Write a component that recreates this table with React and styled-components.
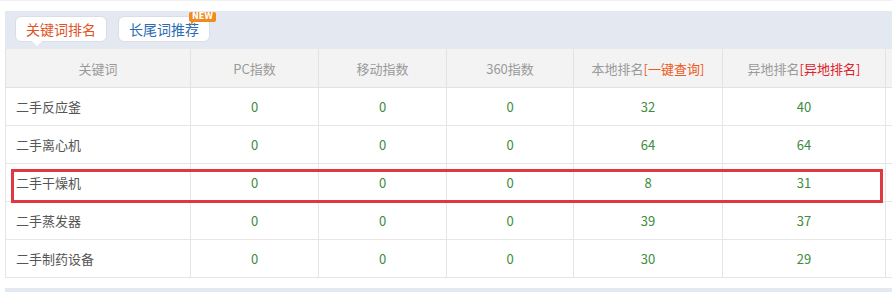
import React from "react";
import styled, { createGlobalStyle } from "styled-components";

const Global = createGlobalStyle`
  html, body { margin: 0; padding: 0; background: #fff; }
  body { font-family: "Microsoft YaHei", "Noto Sans CJK SC", "Noto Sans", sans-serif; }
`;

const Page = styled.div`
  width: 892px;
  height: 292px;
  overflow: hidden;
  box-sizing: border-box;
  border-top: 1px solid #f0f0f0;
  padding: 10px 0 0 5px;
`;

const Panel = styled.div`
  width: 910px;
  position: relative;
`;

const TabBar = styled.div`
  height: 38px;
  background: #e4e8f1;
  display: flex;
  align-items: flex-start;
  gap: 11px;
  padding: 5px 0 0 10px;
  box-sizing: border-box;
`;

const Tab = styled.div`
  position: relative;
  height: 26px;
  box-sizing: border-box;
  padding: 0 10px;
  background: #fff;
  border: 1px solid #d9dde6;
  border-radius: 6px;
  font-size: 14px;
  line-height: 24px;
  color: ${(p) => (p.$active ? "#e2531f" : "#2d6db3")};
  white-space: nowrap;
  ${(p) =>
    p.$active &&
    `
    &::after {
      content: "";
      position: absolute;
      left: 16px;
      bottom: -5px;
      width: 0; height: 0;
      border-left: 5px solid transparent;
      border-right: 5px solid transparent;
      border-top: 5px solid #fff;
    }
  `}
`;

const Badge = styled.span`
  position: absolute;
  right: -7px;
  top: -5px;
  background: #f08c1e;
  color: #fff;
  font-family: "DejaVu Sans", sans-serif;
  font-weight: bold;
  font-size: 8px;
  line-height: 10px;
  padding: 0 3px;
  border-radius: 2px;
  &::after {
    content: "";
    position: absolute;
    left: 2px;
    bottom: -3px;
    border-left: 3px solid #f08c1e;
    border-bottom: 3px solid transparent;
  }
`;

const Table = styled.table`
  border-collapse: collapse;
  table-layout: fixed;
  width: 910px;
  font-size: 13px;
`;

const Th = styled.th`
  height: 38px;
  padding: 0;
  background: #f3f3f3;
  border: 1px solid #e2e2e2;
  border-top: none;
  color: #9a9a9a;
  font-weight: normal;
  text-align: center;
`;

const Td = styled.td`
  height: 38px;
  padding: 0 ${(p) => (p.$left ? "10px" : "0")};
  border: 1px solid #e6e6e6;
  text-align: ${(p) => (p.$left ? "left" : "center")};
  color: ${(p) => (p.$left ? "#555" : "#3d8b3d")};
  box-sizing: border-box;
`;

const Link = styled.span`
  color: ${(p) => p.$color};
`;

const Highlight = styled.div`
  position: absolute;
  left: 6px;
  top: 158px;
  width: 872px;
  height: 34px;
  box-sizing: border-box;
  border: 3px solid #e0383e;
  pointer-events: none;
`;

const Footer = styled.div`
  margin-top: 10px;
  height: 10px;
  background: #e4e8f1;
`;

const rows = [
  ["二手反应釜", 0, 0, 0, 32, 40],
  ["二手离心机", 0, 0, 0, 64, 64],
  ["二手干燥机", 0, 0, 0, 8, 31],
  ["二手蒸发器", 0, 0, 0, 39, 37],
  ["二手制药设备", 0, 0, 0, 30, 29],
];

const widths = [185, 128, 128, 127, 149, 163, 30];

export default function App() {
  return (
    <>
      <Global />
      <Page>
        <Panel>
          <TabBar>
            <Tab $active>关键词排名</Tab>
            <Tab>
              长尾词推荐
              <Badge>NEW</Badge>
            </Tab>
          </TabBar>
          <Table>
            <colgroup>
              {widths.map((w, i) => (
                <col key={i} style={{ width: w }} />
              ))}
            </colgroup>
            <thead>
              <tr>
                <Th>关键词</Th>
                <Th>PC指数</Th>
                <Th>移动指数</Th>
                <Th>360指数</Th>
                <Th>
                  本地排名<Link $color="#ee5a1e">[一键查询]</Link>
                </Th>
                <Th>
                  异地排名<Link $color="#e0202a">[异地排名]</Link>
                </Th>
                <Th></Th>
              </tr>
            </thead>
            <tbody>
              {rows.map((r) => (
                <tr key={r[0]}>
                  <Td $left>{r[0]}</Td>
                  {r.slice(1).map((v, i) => (
                    <Td key={i}>{v}</Td>
                  ))}
                  <Td></Td>
                </tr>
              ))}
            </tbody>
          </Table>
          <Highlight />
          <Footer />
        </Panel>
      </Page>
    </>
  );
}
